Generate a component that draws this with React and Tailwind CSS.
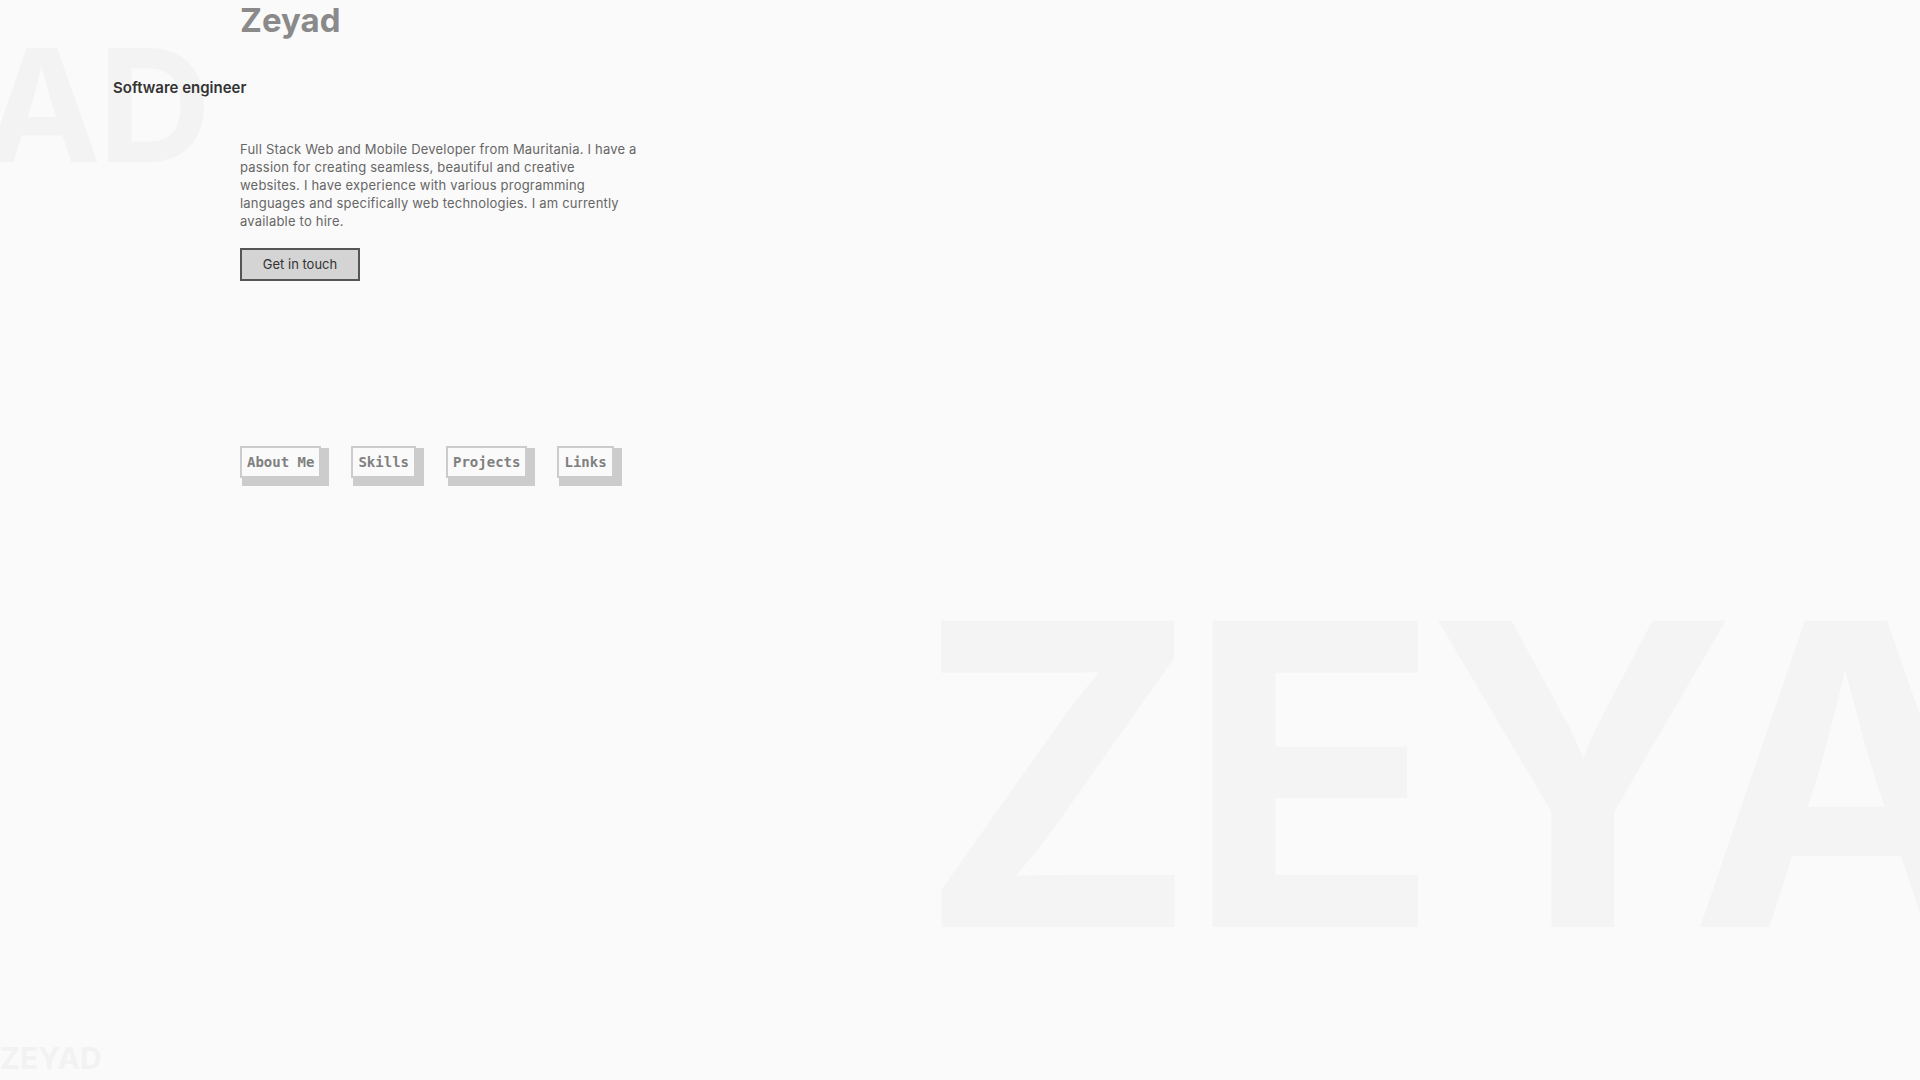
import React from "react";

const sans = { fontFamily: "Inter, 'Noto Sans', sans-serif" };

const links = ["About Me", "Skills", "Projects", "Links"];

const bio = [
  "Full Stack Web and Mobile Developer from Mauritania. I have a",
  "passion for creating seamless, beautiful and creative",
  "websites. I have experience with various programming",
  "languages and specifically web technologies. I am currently",
  "available to hire.",
];

function NavBox({ label }) {
  return (
    <a
      href="#"
      className="block border-2 border-[#cccccc] bg-[#fafafa] px-[5px] py-[3px] text-[14px] leading-[22px] font-bold text-[#808080] shadow-[5px_5px_0_3px_#cccccc]"
      style={{ fontFamily: "'DejaVu Sans Mono', 'Liberation Mono', monospace" }}
    >
      {label}
    </a>
  );
}

export default function App() {
  return (
    <div className="relative min-h-screen w-full overflow-hidden bg-[#fafafa]" style={sans}>
      {/* decorative background words */}
      <div className="pointer-events-none absolute top-[27px] right-[1712px] select-none whitespace-nowrap text-[157px] leading-none font-bold tracking-[-0.02em] text-[#f3f3f3]">
        ZEYAD
      </div>
      <div className="pointer-events-none absolute top-[564px] left-[918px] select-none whitespace-nowrap text-[421px] leading-none font-bold tracking-[-0.03em] text-[#f4f4f4]">
        ZEYAD
      </div>
      <div className="pointer-events-none absolute top-[1043px] left-0 select-none whitespace-nowrap text-[30px] leading-none font-bold text-[#f2f2f2]">
        ZEYAD
      </div>

      <div className="relative pl-[240px]">
        <h1 className="text-[33px] leading-[1.25] font-bold text-[#8a8a8a]">Zeyad</h1>
        <p className="-ml-[127px] mt-[36px] text-[15px] leading-[22px] font-semibold text-[#333333]">
          Software engineer
        </p>
        <p className="mt-[41px] w-[410px] text-[13px] leading-[18px] tracking-[0.2px] text-[#666666]">
          {bio.map((line) => (
            <span key={line} className="block whitespace-nowrap">
              {line}
            </span>
          ))}
        </p>
        <button className="mt-[18px] h-[33px] w-[120px] border-2 border-[#555555] bg-[#d4d4d4] text-[13px] text-[#333333]">
          Get in touch
        </button>

        <nav className="mt-[165px] flex gap-[30px]">
          {links.map((l) => (
            <NavBox key={l} label={l} />
          ))}
        </nav>
      </div>
    </div>
  );
}
